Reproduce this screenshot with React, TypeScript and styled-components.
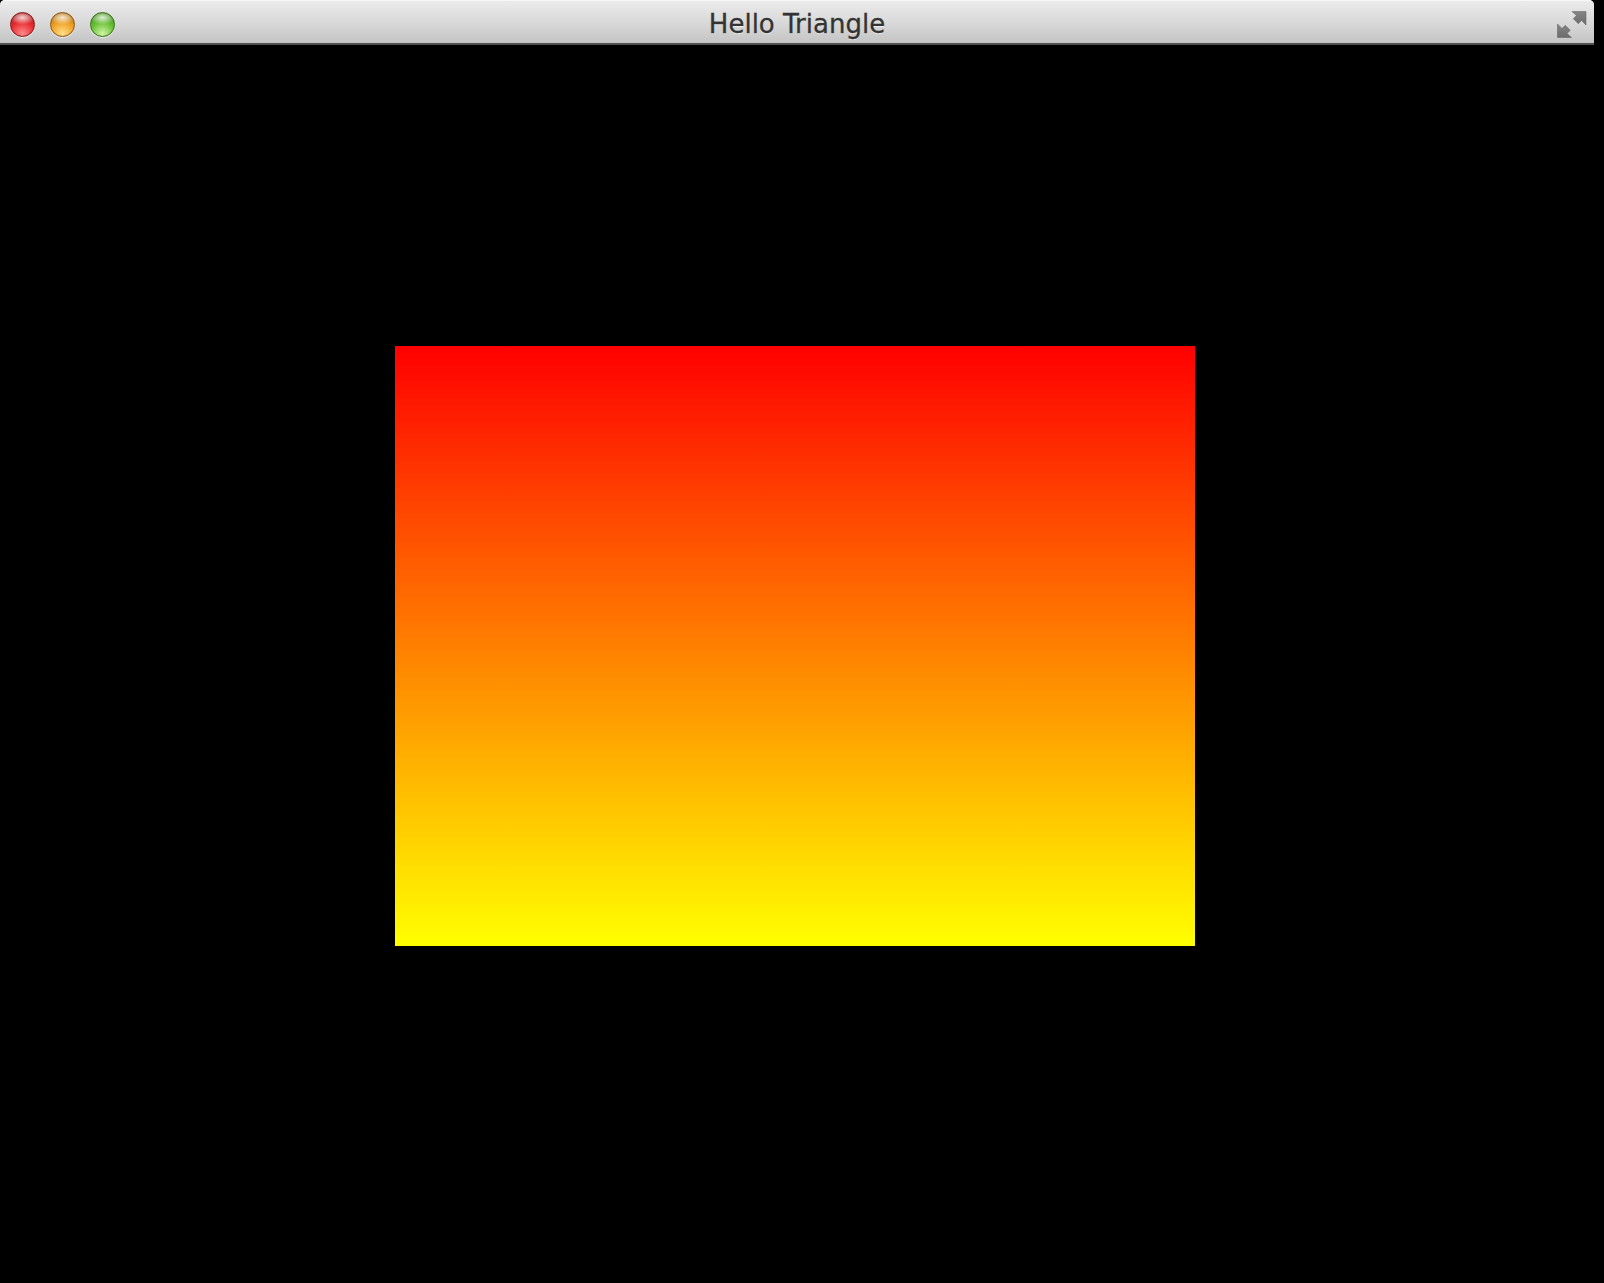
import { createGlobalStyle, styled } from "styled-components";

const GlobalStyle = createGlobalStyle`
  html, body {
    margin: 0;
    padding: 0;
    background: #000;
    height: 100%;
  }
  #root {
    height: 100%;
  }
`;

const LIGHTS = [
  { name: "close", base: "#e62e33", light: "#ff8a8a", edge: "#8a1416" },
  { name: "minimize", base: "#eea126", light: "#ffe08a", edge: "#8f560c" },
  { name: "zoom", base: "#68c035", light: "#d2f5a8", edge: "#357316" },
];

function FullscreenIcon() {
  return (
    <svg width="30" height="27" viewBox="0 0 30 27">
      <defs>
        <linearGradient id="arrowFill" x1="0" y1="0" x2="0" y2="1">
          <stop offset="0" stopColor="#858585" />
          <stop offset="1" stopColor="#6c6c6c" />
        </linearGradient>
      </defs>
      {/* up-right arrow */}
      <path
        d="M29 0.5 L29 14 L24.5 9.5 L21.3 12.7 L16.3 7.7 L19.5 4.5 L15 0.5 Z"
        fill="url(#arrowFill)"
        stroke="#5e5e5e"
        strokeWidth="0.5"
      />
      {/* down-left arrow */}
      <path
        d="M0.5 26.5 L0.5 13 L5 17.5 L8.2 14.3 L13.2 19.3 L10 22.5 L14.5 26.5 Z"
        fill="url(#arrowFill)"
        stroke="#5e5e5e"
        strokeWidth="0.5"
      />
    </svg>
  );
}

function App() {
  return (
    <>
      <GlobalStyle />
      <Window>
        <TitleBar>
          <Lights>
            {LIGHTS.map((l) => (
              <Light key={l.name} $base={l.base} $light={l.light} $edge={l.edge} />
            ))}
          </Lights>
          <Title>Hello Triangle</Title>
          <FullscreenButton>
            <FullscreenIcon />
          </FullscreenButton>
        </TitleBar>
        <Canvas>
          <Quad />
        </Canvas>
      </Window>
    </>
  );
}

const Window = styled.div`
  display: flex;
  flex-direction: column;
  width: 1594px;
  height: 100%;
  background: #000;
`;

const TitleBar = styled.div`
  position: relative;
  display: flex;
  align-items: center;
  justify-content: center;
  height: 45px;
  box-sizing: border-box;
  border-radius: 5px 5px 0 0;
  background: linear-gradient(#ececec 0%, #dadada 50%, #c4c4c4 100%);
  border-bottom: 2px solid #505050;
  box-shadow: inset 0 1px 0 #f7f7f7;
`;

const Lights = styled.div`
  position: absolute;
  left: 10px;
  top: 12px;
  display: flex;
  gap: 15px;
`;

const Light = styled.div<{ $base: string; $light: string; $edge: string }>`
  width: 25px;
  height: 25px;
  border-radius: 50%;
  box-sizing: border-box;
  border: 1px solid ${(p) => p.$edge};
  background:
    radial-gradient(ellipse 55% 30% at 50% 20%, rgba(255, 255, 255, 0.8), rgba(255, 255, 255, 0) 100%),
    radial-gradient(circle at 50% 90%, ${(p) => p.$light} 0%, ${(p) => p.$base} 50%, ${(p) => p.$edge} 105%);
  box-shadow: 0 1px 1px rgba(255, 255, 255, 0.6);
`;

const Title = styled.div`
  font-family: "DejaVu Sans", "Liberation Sans", sans-serif;
  font-size: 26px;
  color: #333;
  text-shadow: 0 1px 0 rgba(255, 255, 255, 0.6);
  -webkit-text-stroke: 0.3px #333;
  padding-top: 5px;
`;

const FullscreenButton = styled.div`
  position: absolute;
  right: 7px;
  top: 11px;
  width: 30px;
  height: 27px;
`;

const Canvas = styled.div`
  flex: 1;
  display: flex;
  justify-content: center;
  align-items: flex-start;
  padding: 301px 4px 0 0;
  background: #000;
`;

const Quad = styled.div`
  width: 800px;
  height: 600px;
  background: linear-gradient(#ff0000, #ffff00);
`;

export default App;
